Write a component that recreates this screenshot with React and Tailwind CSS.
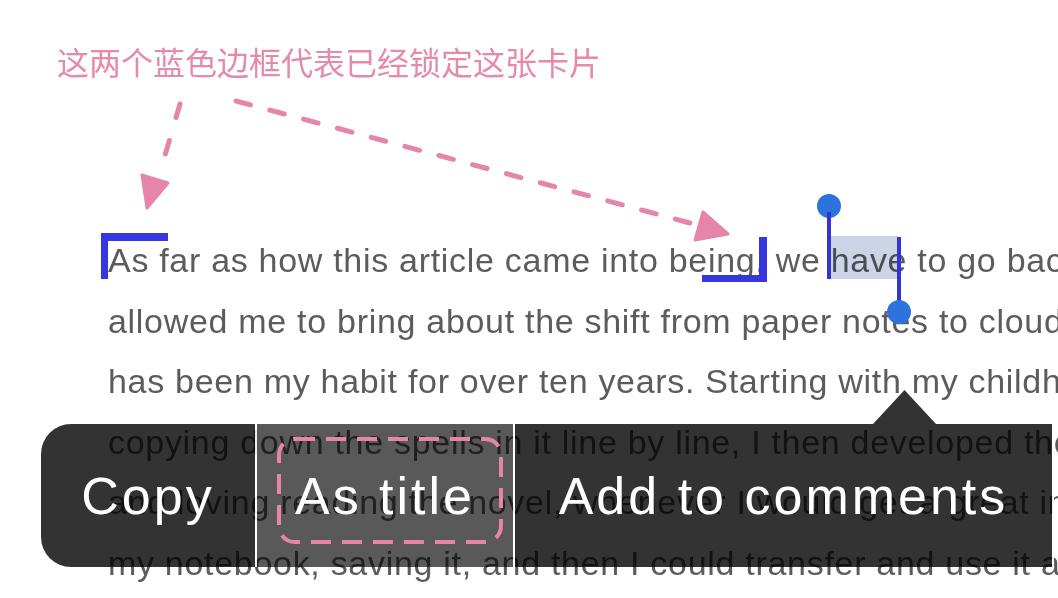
export default function App() {
  const pink = "#e585a9";
  const lines = [
    <>
      As far as how this article came into being, we{" "}
      <span className="relative">
        have
        <span className="absolute left-0 right-[9px] top-[-5px] bottom-0 bg-[#cbd5e7] mix-blend-multiply" />
      </span>{" "}
      to go back to the time when
    </>,
    "allowed me to bring about the shift from paper notes to cloud notes, which",
    "has been my habit for over ten years. Starting with my childhood of reading",
    "copying down the spells in it line by line, I then developed the habit of",
    "and loving reading the novel, whenever I would get a great inspiration, writing",
    "my notebook, saving it, and then I could transfer and use it at any time",
  ];
  return (
    <div className="relative w-[1058px] h-[598px] overflow-hidden bg-white">
      <div className="flex flex-col">
        <p className="pt-[45px] pl-[57px] text-[32px] leading-none tracking-[0px] text-[#e68aab] font-['Noto_Sans_CJK_SC',sans-serif]">
          这两个蓝色边框代表已经锁定这张卡片
        </p>
        <div className="mt-[153px] pl-[108px] text-[34px] leading-[60.5px] tracking-[0.7px] text-[#5c5c5c] font-['Liberation_Sans',Arial,sans-serif]">
          {lines.map((l, i) => (
            <div key={i} className="whitespace-nowrap">
              {l}
            </div>
          ))}
        </div>
      </div>

      {/* lock brackets */}
      <div className="absolute left-[101px] top-[233px] w-[67px] h-[46px] border-l-[7px] border-t-[8px] border-[#3636e3]" />
      <div className="absolute left-[702px] top-[237px] w-[65px] h-[45px] border-r-[8px] border-b-[7px] border-[#3636e3]" />

      {/* selection handles */}
      <div className="absolute left-[817px] top-[194px] flex flex-col items-center">
        <div className="w-[24px] h-[24px] rounded-full bg-[#2e73dd]" />
        <div className="-mt-[6px] w-[4px] h-[67px] bg-[#3434d4]" />
      </div>
      <div className="absolute left-[887px] top-[237px] flex flex-col items-center">
        <div className="w-[4px] h-[68px] bg-[#3434d4]" />
        <div className="-mt-[5px] w-[24px] h-[24px] rounded-full bg-[#2e73dd]" />
      </div>

      {/* context menu */}
      <div className="absolute left-[41px] top-[390px] flex flex-col text-white text-[52px] leading-none tracking-[3px] font-['Liberation_Sans',Arial,sans-serif]">
        <div className="ml-[832px] w-[63px] h-[34px] bg-black/80 [clip-path:polygon(50%_0,100%_100%,0_100%)]" />
        <div className="h-[143px] flex">
          <div className="w-[214px] rounded-l-[30px] bg-black/80 flex items-center justify-center">Copy</div>
          <div className="w-[2px] bg-white/90" />
          <div className="w-[256px] bg-black/65 flex items-center justify-center">As title</div>
          <div className="w-[2px] bg-white/90" />
          <div className="w-[537px] bg-black/80 flex items-center justify-center">Add to comments</div>
          <div className="w-[2px] bg-white/90" />
        </div>
      </div>

      {/* annotations */}
      <svg className="absolute inset-0 pointer-events-none" width="1058" height="598" viewBox="0 0 1058 598">
        <rect x="279" y="439" width="222" height="103" rx="16" fill="none" stroke={pink} strokeWidth="4" strokeDasharray="20 11" />
        <line x1="180" y1="104" x2="159" y2="176" stroke={pink} strokeWidth="5" strokeLinecap="round" strokeDasharray="14 24" />
        <polygon points="147,208 142,175 168,183" fill={pink} stroke={pink} strokeWidth="3" strokeLinejoin="round" />
        <line x1="236" y1="101" x2="690" y2="223" stroke={pink} strokeWidth="5" strokeLinecap="round" strokeDasharray="15 20" />
        <polygon points="728,234 695,240 703,212" fill={pink} stroke={pink} strokeWidth="3" strokeLinejoin="round" />
      </svg>
    </div>
  );
}
